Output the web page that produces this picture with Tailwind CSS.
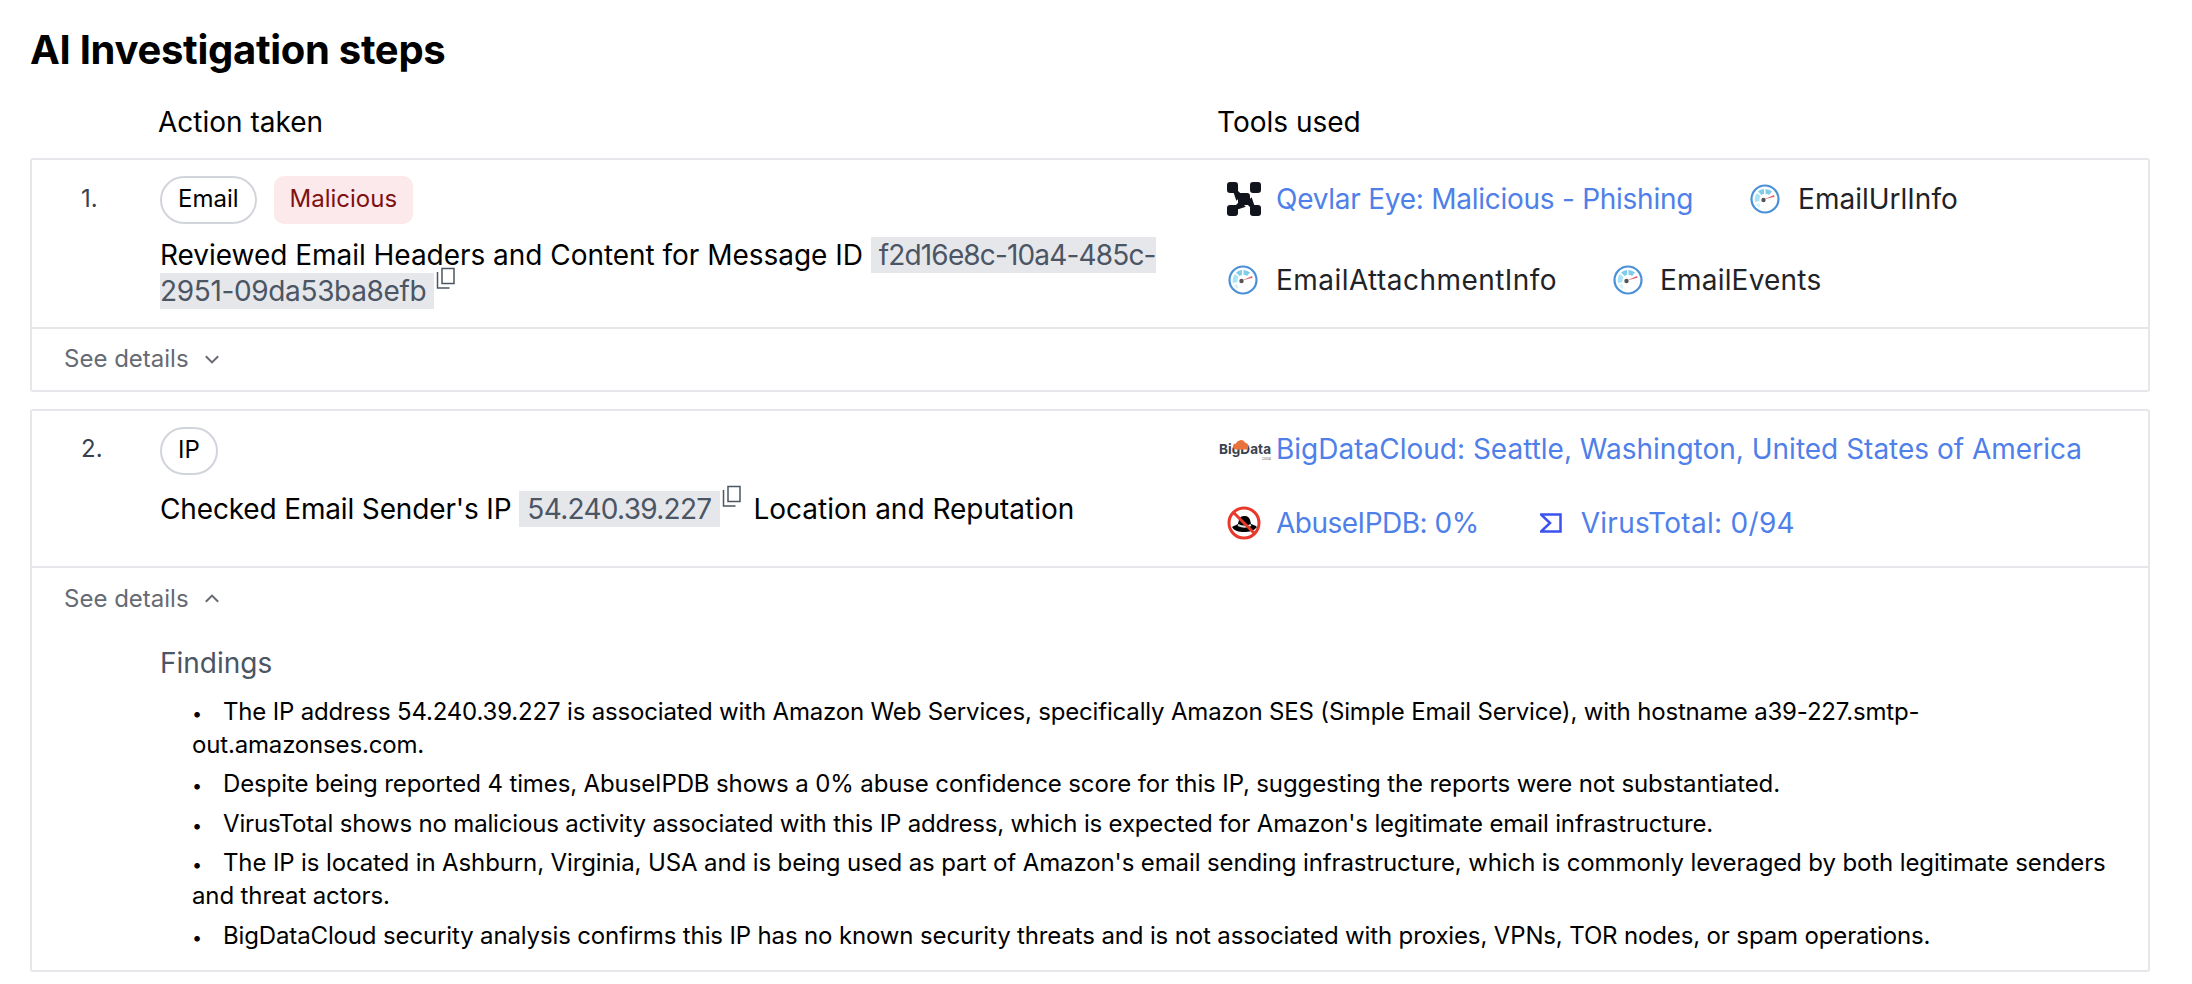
<!DOCTYPE html>
<html lang="en">
<head>
    <meta charset="UTF-8">
    <title>AI Investigation steps</title>
    <script src="https://cdn.jsdelivr.net/npm/@tailwindcss/browser@4"></script>
</head>
<body class="bg-white text-black font-['Inter',sans-serif] w-[2192px] h-[984px] overflow-hidden">
<svg class="hidden">
    <symbol id="gauge" viewBox="0 0 30 30">
        <circle cx="15" cy="15" r="13.5" fill="#fff" stroke="#4a90d9" stroke-width="2.200"/>
        <path d="M5 18a10.500 10.500 0 0 1 2-9l3.500 3a6 6 0 0 0-1 5z" fill="#a8e2f5"/>
        <path d="M8 7.500a10.500 10.500 0 0 1 6-2.500v5a6 6 0 0 0-2.500 1z" fill="#7fcde8"/>
        <path d="M15.500 5a10.500 10.500 0 0 1 6.500 2.500l-3 3.500a6 6 0 0 0-3.500-1.200z" fill="#7fcde8"/>
        <path d="M6 20a10.500 10.500 0 0 0 3 4l1.500-2.500a6 6 0 0 1-1.500-2.500z" fill="#d5f1fa"/>
        <path d="M14 15.500l10-4.500.6 1.800z" fill="#e0605f"/>
        <circle cx="13.500" cy="16" r="2.200" fill="#555"/>
    </symbol>
    <symbol id="copy" viewBox="0 0 20 24">
        <path d="M6 1.500h12v15H6z" fill="none" stroke="#4b5563" stroke-width="1.500"/>
        <path d="M1.500 5v16h12" fill="none" stroke="#4b5563" stroke-width="1.500"/>
    </symbol>
</svg>

<div class="pt-[24px] px-[30px]">
    <h1 class="text-[40px] leading-[52px] font-bold tracking-[-0.3px]">AI Investigation steps</h1>

    <div class="grid grid-cols-[128px_1059px_1fr] mt-[28px] h-[36px] text-[28px] leading-[36px]">
        <div></div>
        <div>Action taken</div>
        <div>Tools used</div>
    </div>

    <!-- step 1 -->
    <div class="mt-[18px] w-[2120px] border-2 border-[#e5e7eb] rounded-[3px]">
        <div class="grid grid-cols-[128px_1058px_1fr] h-[167px]">
            <div class="pl-[49px] pt-[23px] text-[24px] leading-[32px] text-[#374151]">1.</div>
            <div class="pt-[16px]">
                <div class="flex gap-[17px] text-[24px]">
                    <span class="h-[48px] px-[16px] pb-[2px] flex items-center border-2 border-[#d1d5db] rounded-full">Email</span>
                    <span class="h-[48px] px-[16px] pb-[2px] flex items-center bg-[#fbe9eb] text-[#7f1010] rounded-[10px]">Malicious</span>
                </div>
                <p class="mt-[13px] text-[28px] leading-[36px]"><span class="tracking-[-0.03px]">Reviewed Email Headers and Content for Message ID</span> <code class="font-['Inter',sans-serif] bg-[#e5e7eb] text-[#4b5563] px-[8px] py-[1px] tracking-[-0.35px]"><span class="tracking-[-0.85px]">f2d16e8c-10a4-485c-</span>2951-09da53ba8efb</code><svg class="inline-block w-[20px] h-[24px] relative -top-[14px] ml-[2px]"><use href="#copy"/></svg></p>
            </div>
            <div class="pl-[9px] pt-[18px] text-[28px] text-[#1f2328]">
                <div class="flex items-center gap-[57px] h-[42px]">
                    <div class="flex items-center gap-[15px] text-[#4f7fe8] tracking-[-0.26px]">
                        <svg class="w-[34px] h-[34px]" viewBox="0 0 34 34" fill="#11141c"><rect x="0" y="0" width="11" height="11" rx="3"/><rect x="23" y="0" width="11" height="11" rx="3"/><rect x="0" y="23" width="11" height="11" rx="3"/><rect x="23" y="23" width="11" height="11" rx="3"/><rect x="11" y="11" width="12" height="12" rx="3"/><path d="M7 7l6 6-3 3zM27 27l-6-6 3-3zM7 27l6-6 3 3z" stroke="#11141c" stroke-width="3"/></svg>
                        <span>Qevlar Eye: Malicious - Phishing</span>
                    </div>
                    <div class="flex items-center gap-[18px]">
                        <svg class="w-[30px] h-[30px]"><use href="#gauge"/></svg>
                        <span>EmailUrlInfo</span>
                    </div>
                </div>
                <div class="flex items-center gap-[56px] h-[42px] mt-[39px] ml-[1px]">
                    <div class="flex items-center gap-[18px] tracking-[0.45px]">
                        <svg class="w-[30px] h-[30px]"><use href="#gauge"/></svg>
                        <span>EmailAttachmentInfo</span>
                    </div>
                    <div class="flex items-center gap-[17px] tracking-[0.2px]">
                        <svg class="w-[30px] h-[30px]"><use href="#gauge"/></svg>
                        <span>EmailEvents</span>
                    </div>
                </div>
            </div>
        </div>
        <div class="h-[63px] border-t-2 border-[#e5e7eb] pl-[32px] pb-[1px] flex items-center gap-[14px] text-[24px] text-[#666b73]">
            <span>See details</span>
            <svg class="w-[18px] h-[18px]" viewBox="0 0 16 16" fill="none" stroke="#666b73" stroke-width="1.800"><path d="M2.500 5.500l5.500 5.500 5.500-5.500"/></svg>
        </div>
    </div>

    <!-- step 2 -->
    <div class="mt-[17px] w-[2120px] border-2 border-[#e5e7eb] rounded-[3px]">
        <div class="grid grid-cols-[128px_1058px_1fr] h-[155px]">
            <div class="pl-[49px] pt-[22px] text-[24px] leading-[32px] text-[#374151]">2.</div>
            <div class="pt-[16px]">
                <div class="flex gap-[16px] text-[24px]">
                    <span class="h-[48px] px-[16px] pb-[2px] flex items-center border-2 border-[#d1d5db] rounded-full">IP</span>
                </div>
                <p class="mt-[14px] text-[28px] leading-[40px]"><span class="tracking-[-0.15px]">Checked Email Sender's IP</span> <code class="font-['Inter',sans-serif] bg-[#e5e7eb] text-[#4b5563] px-[8px] py-[1px] tracking-[-0.7px]">54.240.39.227</code><svg class="inline-block w-[20px] h-[24px] relative -top-[14px] ml-[2px] mr-[4px]"><use href="#copy"/></svg> Location and Reputation</p>
            </div>
            <div class="pl-[1px] pt-[17px] text-[28px] text-[#4f7fe8]">
                <div class="flex items-center gap-[5px] h-[42px]">
                    <svg class="w-[52px] h-[30px]" viewBox="0 0 52 30">
                        <text x="0" y="20" font-size="13.500" font-weight="700" fill="#3b4250" font-family="Inter" textLength="52">BigData</text>
                        <path d="M17 15.500a3 3 0 0 1 0-6 5 5 0 0 1 9-1 4 4 0 0 1 2 7z" fill="#e8743b"/>
                        <text x="43" y="26" font-size="4" fill="#666" font-family="Inter">cloud</text>
                    </svg>
                    <span>BigDataCloud: Seattle, Washington, United States of America</span>
                </div>
                <div class="flex items-center h-[42px] mt-[32px]">
                    <svg class="ml-[8px] w-[34px] h-[34px]" viewBox="0 0 34 34">
                        <circle cx="17" cy="17" r="15" fill="#fff" stroke="#e8392b" stroke-width="3"/>
                        <path d="M5 21c3-2 5-2 6-3 1-5 2-8 6-8s6 1 7 8c2 1 4 1 6 3-3 4-8 5-13 5s-10-1-12-5z" fill="#000"/>
                        <path d="M11 19c4 2 9 2 13 0" stroke="#ddd" stroke-width="2" fill="none"/>
                        <path d="M7 7l20 20" stroke="#e8392b" stroke-width="3"/>
                    </svg>
                    <span class="ml-[15px] tracking-[-0.5px]">AbuseIPDB: 0%</span>
                    <svg class="ml-[61px] w-[22px] h-[20px]" viewBox="0 0 22 20" fill="none" stroke="#3b51f0" stroke-width="2.500"><path d="M1 1.500h19.500v17H1l9-8.500z"/></svg>
                    <span class="ml-[19px] tracking-[0.3px]">VirusTotal: 0/94</span>
                </div>
            </div>
        </div>
        <div class="border-t-2 border-[#e5e7eb]">
            <div class="h-[62px] pl-[32px] flex items-center gap-[14px] text-[24px] text-[#666b73]">
                <span>See details</span>
                <svg class="w-[18px] h-[18px]" viewBox="0 0 16 16" fill="none" stroke="#666b73" stroke-width="1.800"><path d="M2.500 10.500l5.500-5.500 5.500 5.500"/></svg>
            </div>
            <div class="pl-[128px] pr-[32px] pb-[18px]">
                <h2 class="text-[28px] leading-[36px] text-[#4b5563] mt-[15px]">Findings</h2>
                <ul class="mt-[14px] pl-[32px] flex flex-col gap-[6.4px] text-[24px] leading-[33px] tracking-[-0.17px]">
                    <li><span class="inline-block w-[31px] text-[18px] leading-none">•</span>The IP address 54.240.39.227 is associated with Amazon Web Services, specifically Amazon SES (Simple Email Service), with hostname a39-227.smtp-out.amazonses.com.</li>
                    <li class="tracking-[-0.12px]"><span class="inline-block w-[31px] text-[18px] leading-none">•</span>Despite being reported 4 times, AbuseIPDB shows a 0% abuse confidence score for this IP, suggesting the reports were not substantiated.</li>
                    <li><span class="inline-block w-[31px] text-[18px] leading-none">•</span>VirusTotal shows no malicious activity associated with this IP address, which is expected for Amazon's legitimate email infrastructure.</li>
                    <li class="tracking-[-0.12px]"><span class="inline-block w-[31px] text-[18px] leading-none">•</span>The IP is located in Ashburn, Virginia, USA and is being used as part of Amazon's email sending infrastructure, which is commonly leveraged by both legitimate senders and threat actors.</li>
                    <li class="tracking-[-0.14px]"><span class="inline-block w-[31px] text-[18px] leading-none">•</span>BigDataCloud security analysis confirms this IP has no known security threats and is not associated with proxies, VPNs, TOR nodes, or spam operations.</li>
                </ul>
            </div>
        </div>
    </div>
</div>
</body>
</html>
